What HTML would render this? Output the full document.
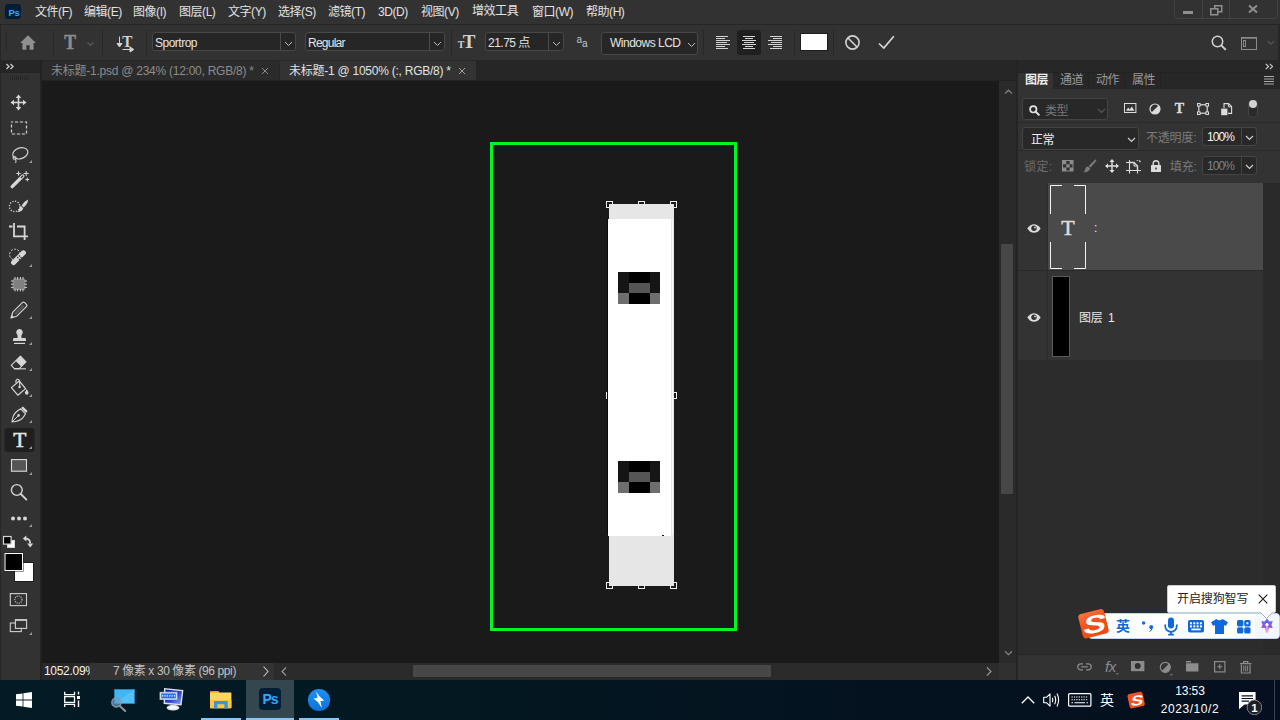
<!DOCTYPE html>
<html lang="zh-CN">
<head>
<meta charset="utf-8">
<title>Photoshop</title>
<style>
*{box-sizing:border-box;margin:0;padding:0}
html,body{width:1280px;height:720px;overflow:hidden;background:#1a1a1a}
body{position:relative;font-family:"Liberation Sans","Noto Sans CJK SC",sans-serif;font-size:12px;color:#dcdcdc;-webkit-font-smoothing:antialiased}
.abs{position:absolute}
svg{position:absolute;overflow:visible}
/* menu bar */
#menubar{position:absolute;left:0;top:0;width:1280px;height:24px;background:#323232}
#menubar span{letter-spacing:-0.45px;position:absolute;top:4px;line-height:16px;font-size:12px;color:#e2e2e2;white-space:nowrap}
/* options bar */
#optbar{position:absolute;left:0;top:24px;width:1280px;height:36px;background:#323232;border-top:1px solid #262626}
.vsep{position:absolute;top:32px;width:1px;height:20px;background:#272727}
.field{letter-spacing:-0.5px;position:absolute;top:32px;height:19px;background:#262626;border:1px solid #474747;border-radius:3px;font-size:12px;line-height:20px;color:#e4e4e4;padding-left:2px;white-space:nowrap}
.field i{position:absolute;top:0;bottom:0;width:1px;background:#4b4b4b}
/* tab bar */
#tabbar{position:absolute;left:42px;top:60px;width:974px;height:21px;background:#262626}
.tab{letter-spacing:-0.25px;position:absolute;top:1px;height:19px;font-size:12px;line-height:21px;white-space:nowrap;padding-left:9px}
/* toolbar */
#toolbar{position:absolute;left:0;top:60px;width:40px;height:620px;background:#323232;border-left:1px solid #262626}
/* canvas */
#canvas{position:absolute;left:42px;top:81px;width:957px;height:582px;background:#1a1a1a}
/* panel */
#panel{position:absolute;left:1018px;top:60px;width:262px;height:620px;background:#2c2c2c}
/* taskbar */
#taskbar{position:absolute;left:0;top:680px;width:1280px;height:40px;background:linear-gradient(90deg,#031b25 0%,#031821 35%,#04121f 70%,#050f1f 100%)}
.ptab{top:12px;font-size:12px;line-height:16px;color:#9a9a9a;letter-spacing:-0.5px;white-space:nowrap}
.pbox{background:#282828;border:1px solid #444;border-radius:3px}
.pbox i{position:absolute;left:38px;top:0;bottom:0;width:1px;background:#444}
</style>
</head>
<body>
<!-- MENU BAR -->
<div id="menubar">
  <div class="abs" style="left:5px;top:4px;width:16px;height:15px;background:#001e36;border-radius:3px"></div>
  <div class="abs" style="left:8.5px;top:5.5px;font-size:9.5px;line-height:13px;font-weight:bold;color:#31a8ff;letter-spacing:-0.4px">Ps</div>
  <span style="left:35px">文件(F)</span>
  <span style="left:84px">编辑(E)</span>
  <span style="left:133px">图像(I)</span>
  <span style="left:179px">图层(L)</span>
  <span style="left:228px">文字(Y)</span>
  <span style="left:278px">选择(S)</span>
  <span style="left:328px">滤镜(T)</span>
  <span style="left:378px">3D(D)</span>
  <span style="left:421px">视图(V)</span>
  <span style="left:472px;top:3px">增效工具</span>
  <span style="left:532px">窗口(W)</span>
  <span style="left:586px">帮助(H)</span>
</div>
<!-- OPTIONS BAR -->
<div id="optbar"></div>
<div class="abs" style="left:0;top:25px;width:1px;height:655px;background:#262626"></div>
<!-- grip -->
<div class="abs" style="left:5px;top:33px;width:2px;height:20px;background:repeating-linear-gradient(180deg,#262626 0 1px,transparent 1px 2px)"></div>
<!-- home -->
<svg style="left:20px;top:35px" width="16" height="15" viewBox="0 0 16 15"><path d="M8 0.3 L16 8 H13.6 V14.8 H9.6 V10.2 H6.4 V14.8 H2.4 V8 H0 Z" fill="#8f8f8f"/></svg>
<div class="vsep" style="left:53px;top:30px;height:25px"></div>
<!-- T tool -->
<svg style="left:62px;top:33px" width="36" height="20" viewBox="0 0 36 20"><text x="0" y="16.2" text-anchor="middle" font-family="Liberation Serif,serif" font-weight="bold" font-size="21" fill="#8c8c8c" stroke="#8c8c8c" stroke-width="0.5" transform="translate(8.2 0) scale(0.84 1)">T</text><path d="M25.5 9.5 L28.5 12.5 L31.5 9.5" fill="none" stroke="#5c5c5c" stroke-width="1.2"/></svg>
<div class="vsep" style="left:102px;top:30px;height:25px"></div>
<!-- orientation -->
<svg style="left:116px;top:35px" width="20" height="18" viewBox="0 0 20 18"><text x="0" y="12" text-anchor="middle" font-family="Liberation Serif,serif" font-weight="bold" font-size="16.5" fill="#d2d2d2" transform="translate(11.2 0) scale(0.92 1)">T</text><path d="M3.5 1.5 V10.5 M1 8.5 L3.5 12 L6 8.5 Z" fill="#d2d2d2" stroke="#d2d2d2" stroke-width="1"/><path d="M6.5 14.5 H15 M14 12 L17.8 14.5 L14 17 Z" fill="#d2d2d2" stroke="#d2d2d2" stroke-width="1"/></svg>
<div class="vsep" style="left:146px;top:30px;height:25px"></div>
<!-- font family -->
<div class="field" style="left:152px;width:144px">Sportrop<i style="left:127px"></i><svg style="left:131px;top:7.5px" width="9" height="6"><path d="M1 1 L4.5 4.5 L8 1" fill="none" stroke="#bcbcbc" stroke-width="1"/></svg></div>
<!-- font style -->
<div class="field" style="left:305px;width:140px;letter-spacing:-0.75px">Regular<i style="left:123px"></i><svg style="left:127px;top:7.5px" width="9" height="6"><path d="M1 1 L4.5 4.5 L8 1" fill="none" stroke="#bcbcbc" stroke-width="1"/></svg></div>
<div class="vsep" style="left:451px;top:30px;height:25px"></div>
<!-- size icon -->
<svg style="left:456px;top:33px" width="22" height="18" viewBox="0 0 22 18"><text x="5" y="15" text-anchor="middle" font-family="Liberation Serif,serif" font-weight="bold" font-size="10" fill="#d2d2d2">T</text><text x="13" y="15" text-anchor="middle" font-family="Liberation Serif,serif" font-weight="bold" font-size="19" fill="#d2d2d2">T</text></svg>
<div class="field" style="left:485px;width:79px">21.75 点<i style="left:62px"></i><svg style="left:66px;top:7.5px" width="9" height="6"><path d="M1 1 L4.5 4.5 L8 1" fill="none" stroke="#bcbcbc" stroke-width="1"/></svg></div>
<!-- aa -->
<svg style="left:575px;top:33px" width="16" height="16" viewBox="0 0 16 16"><text x="1.5" y="10" font-family="Liberation Sans,sans-serif" font-size="10" fill="#c6c6c6">a</text><text x="7" y="13.5" font-family="Liberation Sans,sans-serif" font-size="10" fill="#c6c6c6">a</text></svg>
<div class="field" style="left:601px;width:97px;height:23px;line-height:20px;padding-left:8px">Windows LCD<svg style="left:85px;top:9px" width="9" height="6"><path d="M1 1 L4.5 4.5 L8 1" fill="none" stroke="#bcbcbc" stroke-width="1"/></svg></div>
<div class="vsep" style="left:703px;top:30px;height:25px"></div>
<!-- align -->
<div class="abs" style="left:737px;top:30px;width:24px;height:25px;background:#1f1f1f;border-radius:3px"></div>
<svg style="left:716px;top:35px" width="68" height="15" viewBox="0 0 68 15" shape-rendering="crispEdges"><g stroke="#d4d4d4" stroke-width="1">
<path d="M0 1.5H12M0 3.5H9M0 5.5H14M0 7.5H11M0 9.5H14M0 11.5H9M0 13.5H12"/>
<path d="M27 1.5H39M29 3.5H37M26 5.5H40M28 7.5H38M26 9.5H40M29 11.5H37M27 13.5H39"/>
<path d="M54 1.5H66M57 3.5H66M52 5.5H66M55 7.5H66M52 9.5H66M57 11.5H66M54 13.5H66"/>
</g></svg>
<div class="vsep" style="left:794px;top:30px;height:25px"></div>
<div class="abs" style="left:800px;top:33px;width:28px;height:18px;background:#fff;border:1px solid #1c1c1c"></div>
<div class="vsep" style="left:833px;top:30px;height:25px"></div>
<!-- cancel / commit -->
<svg style="left:844px;top:34px" width="17" height="17" viewBox="0 0 17 17"><circle cx="8.5" cy="8.5" r="6.6" fill="none" stroke="#d4d4d4" stroke-width="1.6"/><path d="M3.8 3.8 L13.2 13.2" stroke="#d4d4d4" stroke-width="1.6"/></svg>
<svg style="left:878px;top:35px" width="17" height="15" viewBox="0 0 17 15"><path d="M1 8.5 L5.8 13 L15.8 1.2" fill="none" stroke="#d8d8d8" stroke-width="1.7"/></svg>
<!-- search / workspace -->
<svg style="left:1210px;top:34px" width="17" height="17" viewBox="0 0 17 17"><circle cx="7.5" cy="7.5" r="5.2" fill="none" stroke="#d4d4d4" stroke-width="1.5"/><path d="M11.3 11.3 L15.8 15.8" stroke="#d4d4d4" stroke-width="1.9"/></svg>
<svg style="left:1241px;top:37px" width="35" height="14" viewBox="0 0 35 14"><rect x="0.5" y="0.5" width="15" height="12" fill="none" stroke="#8a8a8a" stroke-width="1"/><path d="M0 1H16" stroke="#8a8a8a" stroke-width="1.4"/><rect x="2.5" y="3.5" width="2" height="6" fill="none" stroke="#8a8a8a" stroke-width="1"/><path d="M26.5 4.2 L29.7 7.2 L33 4.2" fill="none" stroke="#5a5a5a" stroke-width="1.1"/></svg>
<div class="abs" style="left:1278px;top:25px;width:2px;height:35px;background:#262626"></div>
<!-- window controls -->
<div class="abs" style="left:1174px;top:-4px;width:104px;height:23px;border:1px solid #434343;border-radius:4px"></div>
<div class="abs" style="left:1202px;top:0;width:1px;height:18px;background:#434343"></div>
<div class="abs" style="left:1229px;top:0;width:1px;height:18px;background:#434343"></div>
<div class="abs" style="left:1183px;top:11px;width:10px;height:3px;background:#8f8f8f"></div>
<svg style="left:1210px;top:5px" width="13" height="11" viewBox="0 0 13 11"><rect x="4.75" y="0.75" width="7" height="6" fill="none" stroke="#8f8f8f" stroke-width="1.5"/><rect x="0.75" y="3.75" width="7" height="6" fill="#323232" stroke="#8f8f8f" stroke-width="1.5"/></svg>
<svg style="left:1248px;top:5px" width="10" height="8" viewBox="0 0 10 8"><path d="M1 0.5 L9 7.5 M9 0.5 L1 7.5" stroke="#8f8f8f" stroke-width="2"/></svg>
<!-- TAB BAR -->
<div id="tabbar">
  <div class="tab" style="left:0;width:237px;background:#2b2b2b;color:#8c8c8c">未标题-1.psd @ 234% (12:00, RGB/8) *</div>
  <svg style="left:219px;top:7px" width="8" height="8"><path d="M1 1L7 7M7 1L1 7" stroke="#8c8c8c" stroke-width="1"/></svg>
  <div class="abs" style="left:0;top:20px;width:974px;height:1px;background:#222"></div>
  <div class="tab" style="left:238px;width:196px;background:#333333;color:#e2e2e2">未标题-1 @ 1050% (:, RGB/8) *</div>
  <svg style="left:416px;top:7px" width="8" height="8"><path d="M1 1L7 7M7 1L1 7" stroke="#a0a0a0" stroke-width="1"/></svg>
</div>
<!-- TOOLBAR -->
<div id="toolbar"></div>
<div class="abs" style="left:1px;top:60px;width:39px;height:12px;background:#262626"></div>
<div class="abs" style="left:1px;top:72px;width:39px;height:1px;background:#232323"></div>
<svg style="left:0;top:0" width="42" height="680" viewBox="0 0 42 680">
<path d="M6.5 64 L9 66.5 L6.5 69 M10.5 64 L13 66.5 L10.5 69" fill="none" stroke="#cfcfcf" stroke-width="1.3"/>
<path d="M10.5 76 V80 M12.5 76 V80 M14.5 76 V80 M16.5 76 V80 M18.5 76 V80 M20.5 76 V80 M22.5 76 V80 M24.5 76 V80 M26.5 76 V80 M28.5 76 V80" stroke="#272727" stroke-width="1"/>
<!-- move -->
<path d="M18.5 94.5 L21.3 98 H19.3 V101.7 H23 V99.7 L26.5 102.5 L23 105.3 V103.3 H19.3 V107 H21.3 L18.5 110.5 L15.7 107 H17.7 V103.3 H14 V105.3 L10.5 102.5 L14 99.7 V101.7 H17.7 V98 H15.7 Z" fill="#d6d6d6"/>
<!-- marquee -->
<path d="M11.5 122 H26.5 V134 H11.5 Z" fill="none" stroke="#d6d6d6" stroke-width="1.2" stroke-dasharray="3.2 1.8" stroke-dashoffset="1.6"/>
<!-- lasso -->
<ellipse cx="20.3" cy="153.3" rx="7.8" ry="5.4" transform="rotate(-18 20.3 153.3)" fill="none" stroke="#d6d6d6" stroke-width="1.2"/>
<circle cx="14.6" cy="158" r="1.6" fill="none" stroke="#d6d6d6" stroke-width="1"/>
<path d="M15.4 159.4 Q16.6 161 15.6 163" fill="none" stroke="#d6d6d6" stroke-width="1"/>
<path d="M32 160 V163 H29 Z" fill="#9a9a9a"/>
<!-- wand -->
<path d="M12.2 186.6 L22.8 176" stroke="#d6d6d6" stroke-width="3.4" stroke-linecap="round"/>
<path d="M21.3 177.5 L22.8 176" stroke="#333" stroke-width="1.2" stroke-linecap="round"/>
<path d="M18.5 171.3 V175.7 M16.3 173.5 H20.7 M26.2 171 V176 M23.7 173.5 H28.7 M27.3 177.6 V181.4 M25.4 179.5 H29.2" stroke="#d6d6d6" stroke-width="1"/>
<!-- quick selection -->
<circle cx="14.6" cy="206.4" r="5.2" fill="none" stroke="#d6d6d6" stroke-width="1.3" stroke-dasharray="1.2 1.5"/>
<path d="M28 199.6 Q28.4 203 23.8 207.4 L21.6 205.4 Q25 201 28 199.6Z M21 206 L23.2 208.2 Q22.6 211.6 17 212.2 Q19 210.6 19.2 208.6 Q19.6 206.4 21 206Z" fill="#d6d6d6"/>
<!-- crop -->
<path d="M9 226.5 H12.5 M14 223 V236.3 H28 M17 226.5 H24.6 V240" fill="none" stroke="#d6d6d6" stroke-width="1.8"/>
<!-- healing -->
<circle cx="15" cy="254.6" r="5.4" fill="none" stroke="#d6d6d6" stroke-width="1" stroke-dasharray="2 1.4"/>
<path d="M13.6 262.6 L23.4 252.8" stroke="#d6d6d6" stroke-width="5" stroke-linecap="round"/>
<path d="M17.2 257.2 L18.2 258.2 M18.9 255.5 L19.9 256.5 M18.9 258.9 L19.9 259.9 M20.6 257.2 L21.6 258.2" stroke="#333" stroke-width="1.2"/>
<path d="M32 264 V267 H29 Z" fill="#9a9a9a"/>
<!-- frame chip -->
<rect x="12.6" y="278.4" width="12.8" height="11.6" rx="1.5" fill="#808080"/>
<path d="M15 277 V279.6 M17.6 277 V279.6 M20.4 277 V279.6 M23 277 V279.6 M15 288.8 V291.4 M17.6 288.8 V291.4 M20.4 288.8 V291.4 M23 288.8 V291.4 M11 281 H13.6 M11 284.2 H13.6 M11 287.4 H13.6 M24.4 281 H27 M24.4 284.2 H27 M24.4 287.4 H27" stroke="#cfcfcf" stroke-width="1"/>
<!-- pencil -->
<path d="M11 318 L12.8 312.2 L22.6 302.4 Q23.6 301.6 24.6 302.6 L26.6 304.6 Q27.4 305.6 26.6 306.4 L16.8 316.2 Z" fill="none" stroke="#d6d6d6" stroke-width="1.2" stroke-linejoin="round"/>
<path d="M14.2 313.2 L22.6 304.8 L24.4 306.6 L16 315 Z" fill="#555"/>
<path d="M11 318 L11.9 315 L14 317.1 Z" fill="#d6d6d6"/>
<path d="M32 316 V319 H29 Z" fill="#9a9a9a"/>
<!-- stamp -->
<path d="M19.5 329 A3.4 3.4 0 0 1 21.6 335 Q21 336.6 21.6 338 H24.6 Q26 338 26 339.4 V341 H13 V339.4 Q13 338 14.4 338 H17.4 Q18 336.6 17.4 335 A3.4 3.4 0 0 1 19.5 329Z" fill="#d6d6d6"/>
<path d="M14 343.4 H25" stroke="#d6d6d6" stroke-width="1.2"/>
<path d="M32 342 V345 H29 Z" fill="#9a9a9a"/>
<!-- eraser -->
<path d="M11.2 365.4 L20.4 356.2 L26 361.8 L19.2 368.6 H14.4 Z" fill="none" stroke="#d6d6d6" stroke-width="1.1" stroke-linejoin="round"/>
<path d="M15.6 361 L20.4 356.2 L26 361.8 L21.2 366.6 Z" fill="#d6d6d6"/>
<path d="M14.4 368.8 H26" stroke="#d6d6d6" stroke-width="1.1"/>
<path d="M32 368 V371 H29 Z" fill="#9a9a9a"/>
<!-- bucket -->
<path d="M11.4 387.6 L19.2 381 L25.6 388.6 L17.8 395.2 Z" fill="none" stroke="#d6d6d6" stroke-width="1.2" stroke-linejoin="round"/>
<path d="M19.6 386.6 V381.4 Q19.2 378.8 17 379.4 Q15.2 380.2 16.2 383" fill="none" stroke="#d6d6d6" stroke-width="1.1"/>
<circle cx="19.6" cy="387" r="1.2" fill="#d6d6d6"/>
<path d="M26.6 389 Q29 392 28.4 393.6 Q27.8 395 26.4 394.8 Q24.8 394.4 25 392.6 Q25.4 391 26.6 389Z" fill="#d6d6d6"/>
<path d="M32 394 V397 H29 Z" fill="#9a9a9a"/>
<!-- pen -->
<path d="M12 422 Q12.4 414.8 17 411.2 L20.6 408.8 L25.6 413.8 L23.2 417.4 Q19.6 421.6 12 422 Z" fill="none" stroke="#d6d6d6" stroke-width="1.1" stroke-linejoin="round"/>
<path d="M12.2 421.8 L18 416" stroke="#d6d6d6" stroke-width="1"/>
<circle cx="18.6" cy="415.4" r="1.3" fill="#d6d6d6"/>
<path d="M21 408 L23 406.4 L27.6 411 L26 413 Z" fill="#d6d6d6"/>
<path d="M32 420 V423 H29 Z" fill="#9a9a9a"/>
<!-- T -->
<rect x="4.5" y="428" width="30" height="24" rx="3" fill="#1f1f1f"/>
<text x="19.9" y="447.3" text-anchor="middle" font-family="Liberation Serif,serif" font-size="21.5" fill="#e4e4e4" stroke="#e4e4e4" stroke-width="0.6">T</text>
<path d="M32 446 V449 H29 Z" fill="#9a9a9a"/>
<!-- rect -->
<rect x="11.5" y="459.6" width="15" height="11.6" fill="#555" stroke="#dcdcdc" stroke-width="1.1"/>
<path d="M32 472 V475 H29 Z" fill="#9a9a9a"/>
<!-- zoom -->
<circle cx="16.8" cy="490" r="5.4" fill="none" stroke="#d6d6d6" stroke-width="1.4"/>
<path d="M20.8 494 L26.4 499.6" stroke="#d6d6d6" stroke-width="1.8" stroke-linecap="round"/>
<!-- dots -->
<circle cx="13" cy="518.4" r="2" fill="#d6d6d6"/><circle cx="19" cy="518.4" r="2" fill="#d6d6d6"/><circle cx="25" cy="518.4" r="2" fill="#d6d6d6"/>
<path d="M32 524 V527 H29 Z" fill="#9a9a9a"/>
<!-- default colors -->
<rect x="7.5" y="540.5" width="7" height="7" fill="#fff" stroke="#d6d6d6" stroke-width="1"/>
<rect x="3.5" y="536.5" width="7.6" height="7.6" fill="#000" stroke="#d6d6d6" stroke-width="1.2"/>
<!-- swap -->
<path d="M25.4 538.6 Q30.2 538.6 30.2 543.6" fill="none" stroke="#d6d6d6" stroke-width="1.8"/>
<path d="M22.8 538.6 L26.4 535.6 V541.6 Z M30.2 547.6 L27.2 543.6 H33.2 Z" fill="#d6d6d6"/>
<!-- bg / fg -->
<rect x="14.5" y="562.5" width="19" height="19" fill="#fff" stroke="#1c1c1c" stroke-width="1"/>
<rect x="4" y="552.5" width="19.5" height="19" fill="#1c1c1c"/>
<rect x="5" y="553.5" width="17.5" height="17" fill="#000" stroke="#fff" stroke-width="1"/>
<!-- quick mask -->
<rect x="10.3" y="593.6" width="16.2" height="12" fill="none" stroke="#cfcfcf" stroke-width="1.1"/>
<circle cx="18.4" cy="599.6" r="3.6" fill="none" stroke="#cfcfcf" stroke-width="1.1" stroke-dasharray="1 1.1"/>
<!-- screen mode -->
<rect x="10.3" y="623" width="11" height="8.6" fill="#333" stroke="#cfcfcf" stroke-width="1.1"/>
<rect x="15.4" y="619.8" width="11.2" height="8.6" fill="#333" stroke="#cfcfcf" stroke-width="1.1"/>
<path d="M15 620 H27" stroke="#cfcfcf" stroke-width="1.6"/>
<path d="M32 632 V635 H29 Z" fill="#9a9a9a"/>
</svg>
<!-- CANVAS -->
<div id="canvas"></div>
<svg style="left:0;top:0" width="1280" height="720" viewBox="0 0 1280 720" shape-rendering="crispEdges">
<rect x="491.5" y="143.5" width="244" height="486" fill="none" stroke="#00f722" stroke-width="3"/>
<rect x="606.5" y="201.5" width="6" height="6" fill="#1a1a1a" stroke="#f0f0f0" stroke-width="1"/><rect x="638.5" y="201.5" width="6" height="6" fill="#1a1a1a" stroke="#f0f0f0" stroke-width="1"/><rect x="670.5" y="201.5" width="6" height="6" fill="#1a1a1a" stroke="#f0f0f0" stroke-width="1"/><rect x="606.5" y="392.5" width="6" height="6" fill="#1a1a1a" stroke="#f0f0f0" stroke-width="1"/><rect x="670.5" y="392.5" width="6" height="6" fill="#1a1a1a" stroke="#f0f0f0" stroke-width="1"/><rect x="606.5" y="582.5" width="6" height="6" fill="#1a1a1a" stroke="#f0f0f0" stroke-width="1"/><rect x="638.5" y="582.5" width="6" height="6" fill="#1a1a1a" stroke="#f0f0f0" stroke-width="1"/><rect x="670.5" y="582.5" width="6" height="6" fill="#1a1a1a" stroke="#f0f0f0" stroke-width="1"/>
<rect x="609" y="204" width="65" height="382" fill="#e6e6e6"/>
<rect x="608" y="219" width="63" height="316.5" fill="#ffffff"/>
<rect x="607" y="219" width="1" height="316" fill="#0a0a0a"/>
<rect x="672" y="219" width="1" height="316" fill="#f6f6f6"/>
<rect x="618" y="272.0" width="10.5" height="10.8" fill="#151515"/><rect x="628.5" y="272.0" width="21.0" height="10.8" fill="#000000"/><rect x="649.5" y="272.0" width="10.5" height="10.8" fill="#151515"/><rect x="618" y="282.5" width="10.5" height="10.8" fill="#151515"/><rect x="628.5" y="282.5" width="21.0" height="10.8" fill="#555555"/><rect x="649.5" y="282.5" width="10.5" height="10.8" fill="#151515"/><rect x="618" y="293.0" width="10.5" height="10.8" fill="#6e6e6e"/><rect x="628.5" y="293.0" width="21.0" height="10.8" fill="#000000"/><rect x="649.5" y="293.0" width="10.5" height="10.8" fill="#6e6e6e"/>
<rect x="618" y="461.0" width="10.5" height="10.8" fill="#151515"/><rect x="628.5" y="461.0" width="21.0" height="10.8" fill="#000000"/><rect x="649.5" y="461.0" width="10.5" height="10.8" fill="#151515"/><rect x="618" y="471.5" width="10.5" height="10.8" fill="#151515"/><rect x="628.5" y="471.5" width="21.0" height="10.8" fill="#555555"/><rect x="649.5" y="471.5" width="10.5" height="10.8" fill="#151515"/><rect x="618" y="482.0" width="10.5" height="10.8" fill="#6e6e6e"/><rect x="628.5" y="482.0" width="21.0" height="10.8" fill="#000000"/><rect x="649.5" y="482.0" width="10.5" height="10.8" fill="#6e6e6e"/>
<rect x="662" y="535" width="2" height="1" fill="#111"/>
</svg>
<!-- status bar -->
<div class="abs" style="left:40px;top:663px;width:976px;height:17px;background:#2b2b2b"></div>
<div class="abs" style="left:40px;top:60px;width:2px;height:620px;background:#222"></div>
<div class="abs" style="left:42px;top:663px;width:48px;height:17px;background:#282828;overflow:hidden;white-space:nowrap;color:#f2f2f2;font-size:12px;line-height:16px;padding-left:2px;letter-spacing:-0.3px">1052.09%</div>
<div class="abs" style="left:90px;top:663px;width:184px;height:17px;background:#333;color:#c2c2c2;font-size:12px;line-height:16px;padding-left:23px;white-space:nowrap;letter-spacing:-0.4px">7 像素 x 30 像素 (96 ppi)</div>
<svg style="left:262px;top:666px" width="8" height="11"><path d="M1.5 0.5 L6 5.5 L1.5 10.5" fill="none" stroke="#c8c8c8" stroke-width="1.1"/></svg>
<svg style="left:281px;top:667px" width="6" height="9"><path d="M5 0.5 L1 4.5 L5 8.5" fill="none" stroke="#9a9a9a" stroke-width="1.1"/></svg>
<div class="abs" style="left:413px;top:665px;width:358px;height:12px;background:#474747;border-radius:1px"></div>
<svg style="left:986px;top:667px" width="6" height="9"><path d="M1 0.5 L5 4.5 L1 8.5" fill="none" stroke="#9a9a9a" stroke-width="1.1"/></svg>
<!-- v scrollbar -->
<div class="abs" style="left:999px;top:81px;width:17px;height:582px;background:#2a2a2a"></div>
<div class="abs" style="left:999px;top:663px;width:17px;height:17px;background:#303030"></div>
<div class="abs" style="left:1001px;top:244px;width:12px;height:250px;background:#474747;border-radius:1px"></div>
<svg style="left:1003.5px;top:88.5px" width="9" height="6"><path d="M1 4.6 L4.5 1.2 L8 4.6" fill="none" stroke="#858585" stroke-width="1.2"/></svg>
<svg style="left:1003.5px;top:650px" width="9" height="6"><path d="M1 1.2 L4.5 4.6 L8 1.2" fill="none" stroke="#858585" stroke-width="1.2"/></svg>
<div class="abs" style="left:1016px;top:60px;width:2px;height:620px;background:#242424"></div>
<!-- PANEL -->
<div id="panel">
  <!-- top strip + tabs -->
  <div class="abs" style="left:0;top:0;width:262px;height:29px;background:#272727"></div>
  <svg style="left:247px;top:3px" width="9" height="7"><path d="M0.8 0.8 L3.5 3.5 L0.8 6.2 M4.8 0.8 L7.5 3.5 L4.8 6.2" fill="none" stroke="#c8c8c8" stroke-width="1.2"/></svg>
  <div class="abs" style="left:0;top:12px;width:262px;height:1px;background:#232323"></div>
  <div class="abs" style="left:0;top:13px;width:35px;height:17px;background:#333"></div>
  <div class="abs ptab" style="left:7px;color:#ececec;font-weight:bold">图层</div>
  <div class="abs ptab" style="left:42px">通道</div>
  <div class="abs ptab" style="left:78px">动作</div>
  <div class="abs ptab" style="left:114px">属性</div>
  <div class="abs" style="left:70px;top:12px;width:1px;height:17px;background:#222"></div>
  <div class="abs" style="left:106px;top:12px;width:1px;height:17px;background:#222"></div>
  <div class="abs" style="left:142px;top:12px;width:1px;height:17px;background:#222"></div>
  <svg style="left:246px;top:16px" width="10" height="9"><path d="M0 0.5H10M0 3H10M0 5.5H10M0 8H10" stroke="#a8a8a8" stroke-width="1"/></svg>
  <!-- body -->
  <div class="abs" style="left:0;top:29px;width:262px;height:94px;background:#333"></div>
  <div class="abs" style="left:0;top:62px;width:262px;height:1px;background:#2a2a2a"></div>
  <div class="abs" style="left:0;top:90px;width:262px;height:1px;background:#2a2a2a"></div>
  <!-- search -->
  <div class="abs pbox" style="left:4px;top:38px;width:86px;height:22px"></div>
  <svg style="left:11px;top:45px" width="11" height="11" viewBox="0 0 11 11"><circle cx="4.3" cy="4.3" r="3.2" fill="none" stroke="#e2e2e2" stroke-width="1.7"/><path d="M6.6 6.6 L9.8 9.8" stroke="#e2e2e2" stroke-width="2" stroke-linecap="round"/></svg>
  <div class="abs" style="left:27px;top:43px;font-size:12px;line-height:16px;color:#777;letter-spacing:-0.5px">类型</div>
  <svg style="left:79px;top:48px" width="9" height="6"><path d="M1 1 L4.5 4.5 L8 1" fill="none" stroke="#565656" stroke-width="1.2"/></svg>
  <!-- filter icons -->
  <svg style="left:106px;top:43px" width="13" height="11" viewBox="0 0 13 11"><rect x="0.5" y="0.5" width="11.4" height="9" fill="none" stroke="#dcdcdc" stroke-width="1"/><path d="M2 7.8 L4.2 4.4 L5.8 6.6 L7.8 3.6 L10.4 7.8 Z" fill="#dcdcdc"/></svg>
  <svg style="left:131px;top:43px" width="12" height="12" viewBox="0 0 12 12"><circle cx="6" cy="6" r="5" fill="none" stroke="#dcdcdc" stroke-width="1.2"/><path d="M9.6 2.4 A5 5 0 0 1 2.4 9.6 Z" fill="#dcdcdc"/></svg>
  <svg style="left:155px;top:42px" width="13" height="13" viewBox="0 0 13 13"><text x="6.3" y="11.3" text-anchor="middle" font-family="Liberation Serif,serif" font-weight="bold" font-size="14" fill="#dcdcdc" stroke="#dcdcdc" stroke-width="0.35">T</text></svg>
  <svg style="left:178.5px;top:42.5px" width="12" height="12" viewBox="0 0 12 12"><rect x="1.8" y="1.8" width="8.4" height="8.4" fill="none" stroke="#dcdcdc" stroke-width="1.2"/><g fill="#333" stroke="#dcdcdc" stroke-width="1"><rect x="0.5" y="0.5" width="2.6" height="2.6"/><rect x="8.9" y="0.5" width="2.6" height="2.6"/><rect x="0.5" y="8.9" width="2.6" height="2.6"/><rect x="8.9" y="8.9" width="2.6" height="2.6"/></g></svg>
  <svg style="left:203px;top:43px" width="12" height="13" viewBox="0 0 12 13"><path d="M3 5 V0.6 H7.6 L10.6 3.6 V10.4 H7" fill="none" stroke="#dcdcdc" stroke-width="1.1"/><path d="M7.4 0.6 V3.8 H10.6" fill="none" stroke="#dcdcdc" stroke-width="1"/><rect x="0.2" y="5.6" width="6.2" height="6.6" fill="#dcdcdc"/></svg>
  <div class="abs" style="left:230px;top:40px;width:10px;height:18px;border-radius:5px;background:#2a2a2a;border:1px solid #454545"></div>
  <div class="abs" style="left:231px;top:40px;width:8px;height:8px;border-radius:4px;background:#d2d2d2"></div>
  <!-- blend row -->
  <div class="abs pbox" style="left:4px;top:67px;width:117px;height:23px"></div>
  <div class="abs" style="left:13px;top:72px;font-size:12px;line-height:16px;color:#f0f0f0;letter-spacing:-0.5px">正常</div>
  <svg style="left:109px;top:77px" width="9" height="6"><path d="M1 1 L4.5 4.5 L8 1" fill="none" stroke="#cfcfcf" stroke-width="1.2"/></svg>
  <div class="abs" style="left:128px;top:70px;font-size:12px;line-height:16px;color:#7a7a7a;letter-spacing:-0.2px;white-space:nowrap">不透明度:</div>
  <div class="abs pbox" style="left:184px;top:67px;width:55px;height:19px"><i></i></div>
  <div class="abs" style="left:189px;top:69px;font-size:12px;line-height:16px;color:#f4f4f4;letter-spacing:-0.9px">100%</div>
  <svg style="left:227px;top:75px" width="9" height="6"><path d="M1 1 L4.5 4.5 L8 1" fill="none" stroke="#cfcfcf" stroke-width="1.2"/></svg>
  <!-- lock row -->
  <div class="abs" style="left:6px;top:99px;font-size:12px;line-height:16px;color:#6c6c6c;letter-spacing:0.4px;white-space:nowrap">锁定:</div>
  <svg style="left:44px;top:100px" width="12" height="12" viewBox="0 0 12 12"><rect x="0.5" y="0.5" width="10.5" height="10.5" fill="none" stroke="#8c8c8c" stroke-width="1"/><path d="M1 1H4.3V4.3H1ZM7.6 1H11V4.3H7.6ZM4.3 4.3H7.6V7.6H4.3ZM1 7.6H4.3V11H1ZM7.6 7.6H11V11H7.6Z" fill="#8c8c8c"/></svg>
  <svg style="left:65px;top:99px" width="14" height="14" viewBox="0 0 14 14"><path d="M13.2 0.6 C13.8 1.2 13 2.4 12 3.5 L7.6 8.6 L5.8 7 L10.8 2 C11.8 1 12.7 0.2 13.2 0.6 Z" fill="#7c7c7c"/><path d="M5.2 7.6 L7 9.3 C7 11.8 4 13.6 0.4 13.2 C2.4 12 2 9.8 3 8.6 C3.6 7.8 4.6 7.4 5.2 7.6 Z" fill="#7c7c7c"/></svg>
  <svg style="left:87px;top:99px" width="14" height="14" viewBox="0 0 14 14"><path d="M7 0 L9.6 3 H7.7 V6.3 H11 V4.4 L14 7 L11 9.6 V7.7 H7.7 V11 H9.6 L7 14 L4.4 11 H6.3 V7.7 H3 V9.6 L0 7 L3 4.4 V6.3 H6.3 V3 H4.4 Z" fill="#e0e0e0"/></svg>
  <svg style="left:108px;top:100px" width="15" height="14" viewBox="0 0 15 14"><path d="M3.5 0 V13.5 M11.5 6.5 V13.5 M0 2.5 H9 M0 10.5 H15 M13 0.5 L14.5 2 M11 0 L11.5 1" fill="none" stroke="#dcdcdc" stroke-width="1.1"/><path d="M3.5 2.5 H8 L11.5 6 V10.5" fill="none" stroke="#dcdcdc" stroke-width="1.3"/><path d="M8 2.5 V6 H11.5" fill="none" stroke="#dcdcdc" stroke-width="1"/></svg>
  <svg style="left:133px;top:100px" width="10" height="12" viewBox="0 0 10 12"><path d="M2.2 5.5 V3.6 A2.8 2.8 0 0 1 7.8 3.6 V5.5" fill="none" stroke="#dcdcdc" stroke-width="1.4"/><rect x="0" y="5" width="10" height="7" rx="0.6" fill="#dcdcdc"/><rect x="4.2" y="7.6" width="1.6" height="1.8" fill="#333"/></svg>
  <div class="abs" style="left:152px;top:99px;font-size:12px;line-height:16px;color:#7a7a7a;letter-spacing:-0.2px;white-space:nowrap">填充:</div>
  <div class="abs pbox" style="left:184px;top:96px;width:55px;height:19px"><i></i></div>
  <div class="abs" style="left:189px;top:98px;font-size:12px;line-height:16px;color:#7e848a;letter-spacing:-0.9px">100%</div>
  <svg style="left:227px;top:104px" width="9" height="6"><path d="M1 1 L4.5 4.5 L8 1" fill="none" stroke="#cfcfcf" stroke-width="1.2"/></svg>
  <!-- layers -->
  <div class="abs" style="left:0;top:123px;width:245px;height:177px;background:#333"></div>
  <div class="abs" style="left:30px;top:123px;width:215px;height:87px;background:#4a4a4a"></div>
  <div class="abs" style="left:0;top:210px;width:245px;height:1px;background:#292929"></div>
  <div class="abs" style="left:29px;top:123px;width:1px;height:177px;background:#2c2c2c"></div>
  <div class="abs" style="left:245px;top:123px;width:17px;height:472px;background:#2a2a2a"></div>
  <svg style="left:9px;top:164px" width="14" height="9" viewBox="0 0 14 9"><path d="M0.3 4.5 C2.5 1.2 4.8 0.2 7 0.2 C9.2 0.2 11.5 1.2 13.7 4.5 C11.5 7.8 9.2 8.8 7 8.8 C4.8 8.8 2.5 7.8 0.3 4.5 Z" fill="#dedede"/><circle cx="7" cy="4.3" r="2.7" fill="#333"/><circle cx="8" cy="3.4" r="0.9" fill="#dedede"/></svg>
  <svg style="left:9px;top:253px" width="14" height="9" viewBox="0 0 14 9"><path d="M0.3 4.5 C2.5 1.2 4.8 0.2 7 0.2 C9.2 0.2 11.5 1.2 13.7 4.5 C11.5 7.8 9.2 8.8 7 8.8 C4.8 8.8 2.5 7.8 0.3 4.5 Z" fill="#dedede"/><circle cx="7" cy="4.3" r="2.7" fill="#333"/><circle cx="8" cy="3.4" r="0.9" fill="#dedede"/></svg>
  <!-- text layer thumb -->
  <svg style="left:32px;top:125px" width="37" height="84" viewBox="0 0 37 84"><path d="M12 0.5 H0.5 V29 M24 0.5 H35.5 V29 M0.5 57 V83.5 H12 M35.5 57 V83.5 H24" fill="none" stroke="#f4f4f4" stroke-width="1"/><text x="18" y="50.4" text-anchor="middle" font-family="Liberation Serif,serif" font-size="22" fill="#dedede" stroke="#dedede" stroke-width="0.5">T</text></svg>
  <div class="abs" style="left:76px;top:160px;font-size:12px;line-height:16px;color:#e8e8e8">:</div>
  <!-- layer 1 -->
  <div class="abs" style="left:34px;top:216px;width:18px;height:81px;background:#000;border:1px solid #5a5a5a"></div>
  <div class="abs" style="left:61px;top:250px;font-size:12px;line-height:16px;color:#e8e8e8;white-space:nowrap;letter-spacing:-0.3px;word-spacing:2.5px">图层 1</div>
  <!-- bottom bar -->
  <div class="abs" style="left:0;top:594px;width:262px;height:1px;background:#262626"></div>
  <div class="abs" style="left:0;top:595px;width:262px;height:25px;background:#333"></div>
  <svg style="left:59px;top:603px" width="15" height="8" viewBox="0 0 15 8"><path d="M6 0.8 H3.8 A3 3 0 0 0 3.8 6.8 H6 M9 0.8 H11.2 A3 3 0 0 1 11.2 6.8 H9 M4.2 3.8 H10.8" fill="none" stroke="#8c8c8c" stroke-width="1.3"/></svg>
  <svg style="left:86px;top:599px" width="16" height="17" viewBox="0 0 16 17"><text x="1" y="12.6" font-family="Liberation Sans,sans-serif" font-style="italic" font-size="15" fill="#8c8c8c" letter-spacing="-0.3">fx</text><path d="M11.5 14 H15 L13.2 16 Z" fill="#6a6a6a"/></svg>
  <svg style="left:113px;top:601px" width="14" height="11" viewBox="0 0 14 11"><rect x="0" y="0" width="13.4" height="10.2" fill="#8c8c8c"/><circle cx="6.7" cy="5.1" r="3" fill="#2f2f2f"/></svg>
  <svg style="left:141px;top:601px" width="16" height="16" viewBox="0 0 16 16"><circle cx="6.3" cy="6.3" r="5" fill="none" stroke="#8c8c8c" stroke-width="1.2"/><path d="M9.9 2.7 A5 5 0 0 1 2.7 9.9 Z" fill="#8c8c8c"/><path d="M10.5 13 H14 L12.2 15 Z" fill="#6a6a6a"/></svg>
  <svg style="left:168px;top:601px" width="13" height="11" viewBox="0 0 13 11"><path d="M0 0 H5 V1.6 H0 Z M0 2.2 H12.4 V10.4 H0 Z" fill="#8c8c8c"/></svg>
  <svg style="left:196px;top:601px" width="12" height="12" viewBox="0 0 12 12"><rect x="0.6" y="0.6" width="10.3" height="10.3" fill="none" stroke="#8c8c8c" stroke-width="1.2"/><path d="M5.75 3.2 V8.3 M3.2 5.75 H8.3" stroke="#8c8c8c" stroke-width="1.2"/></svg>
  <svg style="left:222px;top:601px" width="12" height="13" viewBox="0 0 12 13"><path d="M0 2.6 H11.4 M3.6 2.4 V0.6 H7.8 V2.4" fill="none" stroke="#8c8c8c" stroke-width="1.2"/><path d="M1.4 3.4 V12 H10 V3.4" fill="none" stroke="#8c8c8c" stroke-width="1.2"/><path d="M3.8 4.6 V10.4 M5.7 4.6 V10.4 M7.6 4.6 V10.4" stroke="#8c8c8c" stroke-width="1"/></svg>
</div>
<!-- TASKBAR -->
<div id="taskbar">
  <!-- start -->
  <svg style="left:16px;top:12px" width="16" height="16" viewBox="0 0 16 16"><path d="M0 2.3 L6.6 1.4 V7.6 H0 Z M7.4 1.3 L16 0 V7.6 H7.4 Z M0 8.4 H6.6 V14.6 L0 13.7 Z M7.4 8.4 H16 V16 L7.4 14.7 Z" fill="#fff"/></svg>
  <!-- task view -->
  <svg style="left:64px;top:11px" width="17" height="17" viewBox="0 0 17 17"><path d="M0.7 0.8 V3.6 H10.5 V0.8 M0.7 16 V13.4 H10.5 V16" fill="none" stroke="#fff" stroke-width="1.3"/><rect x="0.7" y="5.6" width="9.8" height="5.8" fill="none" stroke="#fff" stroke-width="1.3"/><path d="M14.5 0.8 V3.6 M14.5 9.4 V16" stroke="#fff" stroke-width="1.4"/><rect x="13" y="5" width="3" height="3" fill="#fff"/></svg>
  <!-- search app -->
  <svg style="left:110px;top:8px" width="26" height="26" viewBox="0 0 26 26"><rect x="4.5" y="1.5" width="20" height="14" fill="#41b6f2" stroke="#2b7fb3" stroke-width="1"/><path d="M5 15 L24 2 V15 Z" fill="#63c8fa" opacity="0.55"/><circle cx="6.4" cy="14.4" r="4.6" fill="#5a9fcf" fill-opacity="0.7" stroke="#8c98a6" stroke-width="1.3"/><path d="M9.8 18 L15.2 23" stroke="#8f99a5" stroke-width="2" stroke-linecap="round"/></svg>
  <!-- remote desktop -->
  <svg style="left:158px;top:8px" width="28" height="26" viewBox="0 0 28 26"><defs><linearGradient id="rdg" x1="0" y1="0" x2="1" y2="1"><stop offset="0" stop-color="#0712a8"/><stop offset="0.55" stop-color="#2746d6"/><stop offset="1" stop-color="#8fa9f0"/></linearGradient></defs><path d="M6 0 L25.4 2 L23.6 17.6 L5.6 16 Z" fill="#dfe3ea"/><path d="M7.4 1.4 L24 3.2 L22.4 16 L7 14.6 Z" fill="url(#rdg)"/><rect x="2" y="4.2" width="17" height="7.4" fill="#e8eef8" stroke="#b9c4d6" stroke-width="0.8"/><rect x="3.2" y="5.4" width="14.6" height="5" fill="#2c6fe0"/><path d="M4 7.9 H17" stroke="#fff" stroke-width="1.2" stroke-dasharray="1.2 1.2"/><path d="M12.4 16.6 L18.4 17.2 L18.6 19.6 H12.4 Z" fill="#b9bec8"/><ellipse cx="15" cy="19.8" rx="6.4" ry="2.8" fill="#e3e6ea"/><ellipse cx="15" cy="19.4" rx="4" ry="1.4" fill="#f6f7f9"/></svg>
  <!-- explorer -->
  <svg style="left:210px;top:11px" width="22" height="18" viewBox="0 0 22 18"><path d="M0 0.8 Q0 0 0.8 0 H8.4 L9.6 2 H0 Z" fill="#e8a010"/><rect x="0" y="1.4" width="21.4" height="15.8" rx="0.6" fill="#ffd566"/><path d="M0 9 H21.4 V16.6 Q21.4 17.2 20.8 17.2 H0.6 Q0 17.2 0 16.6 Z" fill="#fac740"/><path d="M4 17.6 V10.8 Q4 10 4.8 10 H17 Q17.8 10 17.8 10.8 V17.6 H14.4 V13.2 H7.4 V17.6 Z" fill="#3b94e0"/></svg>
  <div class="abs" style="left:201px;top:38px;width:40px;height:2px;background:#86c6fa"></div>
  <!-- ps -->
  <div class="abs" style="left:246px;top:0;width:48px;height:40px;background:#34474f"></div>
  <div class="abs" style="left:246px;top:38px;width:48px;height:2px;background:#86c6fa"></div>
  <div class="abs" style="left:259px;top:8px;width:22px;height:22px;border-radius:4px;background:#001e36"></div>
  <div class="abs" style="left:262.5px;top:10px;width:18px;font-size:14px;line-height:18px;font-weight:bold;color:#31a8ff;letter-spacing:-1px">Ps</div>
  <!-- thunder -->
  <svg style="left:308px;top:9px" width="22" height="22" viewBox="0 0 22 22"><defs><linearGradient id="thg" x1="0" y1="0" x2="0" y2="1"><stop offset="0" stop-color="#1f90f2"/><stop offset="1" stop-color="#0c72dc"/></linearGradient></defs><circle cx="11" cy="11" r="11.1" fill="url(#thg)"/><path d="M8.2 2.8 L11.6 7.6 L16.2 11.4 L12.4 12.2 L13.9 19 L9.6 12.8 L5.4 9.6 L9.6 9 Z" fill="#fff"/></svg>
  <div class="abs" style="left:299px;top:38px;width:40px;height:2px;background:#86c6fa"></div>
  <!-- tray -->
  <svg style="left:1021px;top:16px" width="14" height="8" viewBox="0 0 14 8"><path d="M0.8 7.2 L7 1 L13.2 7.2" fill="none" stroke="#fff" stroke-width="1.3"/></svg>
  <svg style="left:1043px;top:12px" width="18" height="16" viewBox="0 0 18 16"><path d="M0.7 5.3 H3.5 L7 1.8 V14.2 L3.5 10.7 H0.7 Z" fill="none" stroke="#fff" stroke-width="1.1" stroke-linejoin="round"/><path d="M9.3 5.8 Q10.5 8 9.3 10.2 M11.6 3.8 Q13.8 8 11.6 12.2 M14 1.6 Q17.2 8 14 14.4" fill="none" stroke="#fff" stroke-width="1.1"/></svg>
  <svg style="left:1068px;top:13px" width="24" height="14" viewBox="0 0 24 14"><rect x="0.6" y="0.6" width="22.3" height="12.6" rx="1" fill="none" stroke="#fff" stroke-width="1.2"/><path d="M3.5 4 H20 M3.5 6.7 H20" stroke="#fff" stroke-width="1.1" stroke-dasharray="1.3 1.1"/><path d="M3.5 9.7 H5 M6.5 9.7 H17 M18.5 9.7 H20" stroke="#fff" stroke-width="1.1"/></svg>
  <div class="abs" style="left:1100px;top:11px;font-size:14px;line-height:18px;color:#fff">英</div>
  <svg style="left:1126px;top:11px" width="20" height="18" viewBox="0 0 20 18"><g transform="rotate(-12 10 9)"><rect x="2.4" y="1.8" width="15.4" height="14.6" rx="2.4" fill="#f4511e"/><text x="0" y="0" text-anchor="middle" font-family="Liberation Sans,sans-serif" font-weight="bold" font-size="14" fill="#fff" transform="translate(9.2 14.2) rotate(6) skewX(-16) scale(1.32 1)">S</text></g></svg>
  <div class="abs" style="left:1150px;top:3px;width:80px;text-align:center;font-size:12px;line-height:16px;color:#fff;letter-spacing:-0.1px">13:53</div>
  <div class="abs" style="left:1150px;top:21px;width:80px;text-align:center;font-size:12px;line-height:16px;color:#fff;letter-spacing:0.55px">2023/10/2</div>
  <svg style="left:1238px;top:11px" width="26" height="26" viewBox="0 0 26 26"><path d="M1 1 H17.6 V13.6 H6.5 L1 18.2 Z" fill="#fff"/><path d="M3.6 4.8 H15 M3.6 7.5 H15 M3.6 10.2 H11" stroke="#04101f" stroke-width="1.2"/><circle cx="16.4" cy="16.4" r="7.3" fill="#1d1f24" stroke="#7d828a" stroke-width="1"/><text x="16.4" y="20.6" text-anchor="middle" font-family="Liberation Sans,sans-serif" font-weight="bold" font-size="11.5" fill="#fff">1</text></svg>
  <div class="abs" style="left:1274px;top:0;width:1px;height:40px;background:#3a434e"></div>
</div>
<!-- Sogou IME bar -->
<div class="abs" style="left:1088px;top:613px;width:192px;height:26px;background:#fff;border:1px solid #bcd6f5;border-radius:4px"></div>
<div class="abs" style="left:1255px;top:614px;width:24px;height:24px;background:#f4f6fd;border-radius:3px"></div>
<svg style="left:1076px;top:606px" width="36" height="36" viewBox="0 0 36 36"><defs><linearGradient id="sgg" x1="0" y1="0" x2="0.3" y2="1"><stop offset="0" stop-color="#fb7a3a"/><stop offset="0.5" stop-color="#f4511e"/><stop offset="1" stop-color="#f04a12"/></linearGradient></defs><g transform="rotate(-14 17.7 17.7)"><rect x="4.2" y="5.2" width="26.6" height="25" rx="3.6" fill="url(#sgg)"/><text x="0" y="0" text-anchor="middle" font-family="Liberation Sans,sans-serif" font-weight="bold" font-size="25" fill="#fff" transform="translate(15.6 26.6) rotate(6) skewX(-16) scale(1.36 1)">S</text></g></svg>
<div class="abs" style="left:1116px;top:617px;font-size:14px;line-height:18px;font-weight:bold;color:#0f68dc">英</div>
<svg style="left:1141px;top:619px" width="14" height="14" viewBox="0 0 14 14"><circle cx="2.6" cy="4" r="1.7" fill="#0f68dc"/><path d="M8.2 8.2 A1.9 1.9 0 1 1 11.8 9 Q11.6 11.6 8.6 13 L8.2 12.2 Q9.9 11.2 10 10.2 Q8.6 10.2 8.2 8.2Z" fill="#0f68dc"/></svg>
<svg style="left:1164px;top:617px" width="14" height="19" viewBox="0 0 14 19"><rect x="4" y="0.5" width="6" height="11" rx="3" fill="#0f68dc"/><path d="M1.2 7.5 V9 A5.8 5.8 0 0 0 12.8 9 V7.5" fill="none" stroke="#0f68dc" stroke-width="1.7"/><path d="M7 14.6 V17.6 M4.2 17.7 H9.8" stroke="#0f68dc" stroke-width="1.7"/></svg>
<svg style="left:1188px;top:620px" width="16" height="13" viewBox="0 0 16 13"><rect x="0" y="0" width="16" height="12.4" rx="2" fill="#0f68dc"/><g fill="#fff"><rect x="2" y="2.3" width="2" height="2"/><rect x="5.3" y="2.3" width="2" height="2"/><rect x="8.6" y="2.3" width="2" height="2"/><rect x="11.9" y="2.3" width="2" height="2"/><rect x="2" y="5.4" width="2" height="2"/><rect x="5.3" y="5.4" width="2" height="2"/><rect x="8.6" y="5.4" width="2" height="2"/><rect x="11.9" y="5.4" width="2" height="2"/><rect x="3.3" y="8.6" width="9.4" height="1.7"/></g></svg>
<svg style="left:1211px;top:619px" width="17" height="15" viewBox="0 0 17 15"><path d="M5.4 0 Q8.5 2.6 11.6 0 L17 3.2 L14.8 7 L13 6 V15 H4 V6 L2.2 7 L0 3.2 Z" fill="#0f68dc"/></svg>
<svg style="left:1237px;top:620px" width="14" height="14" viewBox="0 0 14 14"><g fill="#0f68dc"><rect x="0" y="0" width="6.4" height="6.4" rx="1.6"/><path fill-rule="evenodd" d="M8.8 0 H12 Q13.6 0 13.6 1.6 V4.8 Q13.6 6.4 12 6.4 H8.8 Q7.2 6.4 7.2 4.8 V1.6 Q7.2 0 8.8 0 Z M9.4 2.2 V4.2 H11.4 V2.2 Z"/><rect x="0" y="7.2" width="6.4" height="6.4" rx="1.6"/><rect x="7.2" y="7.2" width="6.4" height="6.4" rx="1.6"/></g></svg>
<svg style="left:1260px;top:618px" width="14" height="16" viewBox="0 0 14 16"><defs><linearGradient id="zxg" x1="0" y1="0" x2="0" y2="1"><stop offset="0" stop-color="#3f6cf6"/><stop offset="0.5" stop-color="#8a55e6"/><stop offset="0.85" stop-color="#c455b8"/><stop offset="1" stop-color="#ee5a4a"/></linearGradient></defs><path d="M7 0.6 L9.2 3.4 L12.8 3.2 L11.4 6.6 L12.8 10 L9.2 9.8 L8.6 10.6 L8 14.6 H6 L5.4 10.6 L4.8 9.8 L1.2 10 L2.6 6.6 L1.2 3.2 L4.8 3.4 Z" fill="url(#zxg)"/><circle cx="7" cy="6.6" r="1.7" fill="#fff"/><path d="M7 7 V14.6" stroke="#fff" stroke-width="0.9"/></svg>
<!-- tooltip -->
<div class="abs" style="left:1167px;top:585px;width:109px;height:28px;background:#fff;border:1px solid #c9ccd1;border-radius:2px"></div>
<svg style="left:1261px;top:612px" width="11" height="7" viewBox="0 0 11 7"><path d="M0 0 H11 V1 L5.5 6.5 L0 1 Z" fill="#fff"/><path d="M0 1 L5.5 6.5 L11 1" fill="none" stroke="#9a9da3" stroke-width="0.9"/></svg>
<div class="abs" style="left:1177px;top:591px;font-size:12px;line-height:17px;color:#222;white-space:nowrap;letter-spacing:-0.1px">开启搜狗智写</div>
<svg style="left:1258px;top:594px" width="10" height="10" viewBox="0 0 10 10"><path d="M0.7 0.7 L9.3 9.3 M9.3 0.7 L0.7 9.3" stroke="#222" stroke-width="1.2"/></svg>
</body>
</html>
